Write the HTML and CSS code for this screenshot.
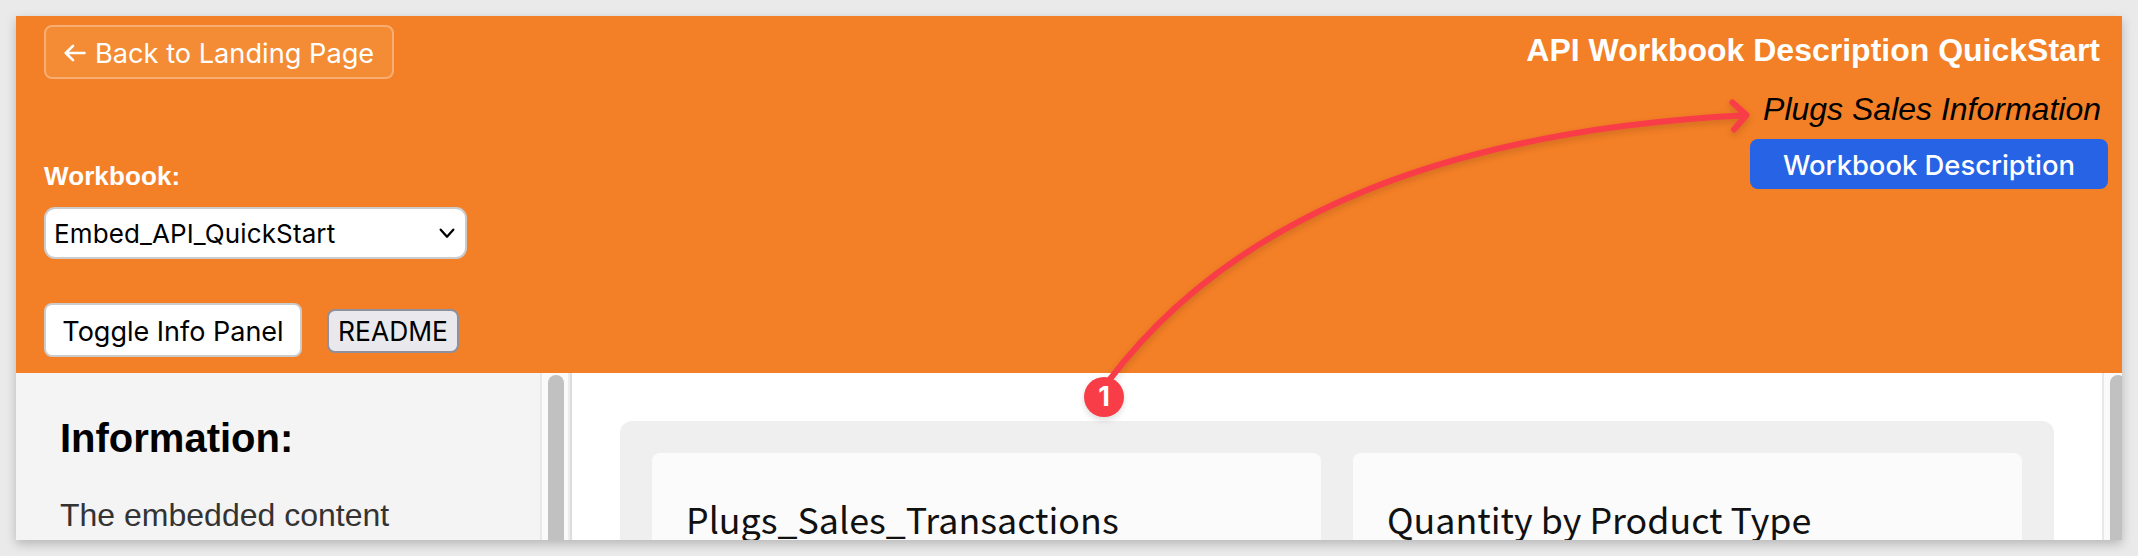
FILE: index.html
```html
<!DOCTYPE html>
<html lang="en">
<head>
<meta charset="utf-8">
<title>API Workbook Description QuickStart</title>
<link rel="stylesheet" href="styles.css">
</head>
<body>
<div class="frame">
  <header class="header">
    <div class="controls">
      <a class="btn back"><svg class="back-arrow" width="22" height="18" viewBox="0 0 22 18"><path d="M20.5 9H2M9 1.8L1.8 9L9 16.2"/></svg><span>Back to Landing Page</span></a>
      <label class="label">Workbook:</label>
      <div class="select"><span>Embed_API_QuickStart</span><svg width="16" height="11" viewBox="0 0 16 11"><path d="M1.7 1.7L8 8.7L14.3 1.7"/></svg></div>
      <div class="actions">
        <button class="btn toggle">Toggle Info Panel</button>
        <button class="btn readme">README</button>
      </div>
    </div>
    <div class="heading">
      <h1 class="title">API Workbook Description QuickStart</h1>
      <div class="subtitle">Plugs Sales Information</div>
      <button class="btn describe">Workbook Description</button>
    </div>
  </header>
  <div class="body">
    <aside class="sidebar">
      <h2 class="info-title">Information:</h2>
      <p class="info-text">The embedded content</p>
    </aside>
    <div class="track"><div class="thumb"></div></div>
    <main class="main">
      <div class="panel">
        <section class="card"><span class="card-a">Plugs_Sales_Transactions</span></section>
        <section class="card"><span class="card-b">Quantity by Product Type</span></section>
      </div>
    </main>
    <div class="track track-end"><div class="thumb"></div></div>
  </div>
</div>
<svg class="callout" width="2138" height="556" viewBox="0 0 2138 556">
  <path d="M1107 383Q1290 138 1746 115.3M1732.5 102.5L1746.5 115L1734 129.5"/>
</svg>
<div class="badge">1</div>
</body>
</html>
```
FILE: styles.css
```css
* { box-sizing: border-box; }
body {
  margin: 0;
  width: 2138px;
  height: 556px;
  padding: 16px;
  overflow: hidden;
  background: #eaeaea;
  font-family: Inter, "Liberation Sans", sans-serif;
  color: #000;
}
.frame {
  width: 2106px;
  height: 524px;
  overflow: hidden;
  background: #fff;
  box-shadow: 0 4px 10px rgba(0, 0, 0, .22);
}
.header {
  display: flex;
  justify-content: space-between;
  height: 357px;
  padding: 9px 14px 0 28px;
  background: #f37f26;
}
.controls { display: flex; flex-direction: column; align-items: flex-start; }
.btn {
  display: flex;
  align-items: center;
  justify-content: center;
  padding: 2px 0 0;
  border: 2px solid #ccc;
  border-radius: 8px;
  background: #fff;
  color: #000;
  font: 400 27px Inter, sans-serif;
  white-space: nowrap;
}
.back {
  width: 350px;
  height: 54px;
  justify-content: flex-start;
  gap: 9px;
  padding-left: 18px;
  border-color: #f8ae72;
  background: #f48c35;
  color: #fff;
  font-size: 27.2px;
}
.back-arrow path { fill: none; stroke: #fff; stroke-width: 2.6; stroke-linecap: round; stroke-linejoin: round; }
.label {
  height: 30px;
  margin-top: 82px;
  font: bold 26px/30px "Liberation Sans", sans-serif;
  letter-spacing: .1px;
  color: #fff;
}
.select {
  display: flex;
  align-items: center;
  justify-content: space-between;
  width: 423px;
  height: 52px;
  margin-top: 16px;
  padding: 0 10px 0 8px;
  border: 2px solid #ccc;
  border-radius: 11px;
  background: #fff;
  font-size: 26px;
  letter-spacing: .12px;
}
.select path { fill: none; stroke: #000; stroke-width: 2.3; stroke-linecap: round; stroke-linejoin: round; }
.actions { display: flex; align-items: center; gap: 25px; margin-top: 44px; }
.toggle { width: 258px; height: 54px; }
.readme {
  width: 132px;
  height: 44px;
  margin-top: 2px;
  padding-top: 0;
  border-color: #8f8f9d;
  background: #e9e9ed;
  font-size: 26.4px;
}
.heading { display: flex; flex-direction: column; align-items: flex-end; }
.title {
  margin: 7px 8px 0 0;
  font: bold 32px/36px "Liberation Sans", sans-serif;
  color: #fff;
}
.subtitle {
  margin: 23px 7px 0 0;
  font: italic 32px/36px "Liberation Sans", sans-serif;
}
.describe {
  width: 358px;
  height: 50px;
  margin-top: 12px;
  border: 0;
  background: #2764e5;
  color: #fff;
  font-size: 27.4px;
  font-weight: 500;
}
.body { display: flex; height: 167px; }
.sidebar { width: 524px; padding: 42px 0 0 44px; background: #f4f4f4; }
.info-title { margin: 0; font: bold 40px/46px "Liberation Sans", sans-serif; }
.info-text { margin: 36px 0 0; font: 32px/36px "Liberation Sans", sans-serif; color: #333; }
.track {
  width: 30px;
  padding: 2px 0 0 6px;
  border-left: 2px solid #e8e8e8;
  border-right: 2px solid #ededed;
  background: #fafafa;
}
.thumb { width: 16px; height: 180px; border-radius: 8px; background: #c1c1c1; }
.main { width: 1532px; padding: 48px 48px 0; border-left: 2px solid #ddd; background: #fff; }
.panel {
  display: flex;
  gap: 32px;
  width: 1434px;
  height: 130px;
  padding: 32px 32px 0;
  border-radius: 12px 12px 0 0;
  background: #efefef;
}
.card {
  flex: 1;
  height: 90px;
  padding: 39px 0 0 34px;
  border-radius: 8px 8px 0 0;
  background: #fbfbfb;
  font: 35.8px/52px "Noto Sans CJK SC", sans-serif;
  color: #111;
  white-space: nowrap;
}
.track-end { width: 20px; border-right: 0; }
.callout { position: absolute; left: 0; top: 0; filter: drop-shadow(0 3px 3px rgba(0, 0, 0, .14)); }
.callout path { fill: none; stroke: #f93d48; stroke-width: 6; stroke-linecap: round; stroke-linejoin: round; }
.badge {
  position: absolute;
  left: 1084px;
  top: 377px;
  width: 40px;
  height: 40px;
  border-radius: 50%;
  background: #f93d48;
  color: #fff;
  font: 700 27px/39px Inter, sans-serif;
  text-align: center;
  box-shadow: 0 3px 6px rgba(0, 0, 0, .14);
}
```
